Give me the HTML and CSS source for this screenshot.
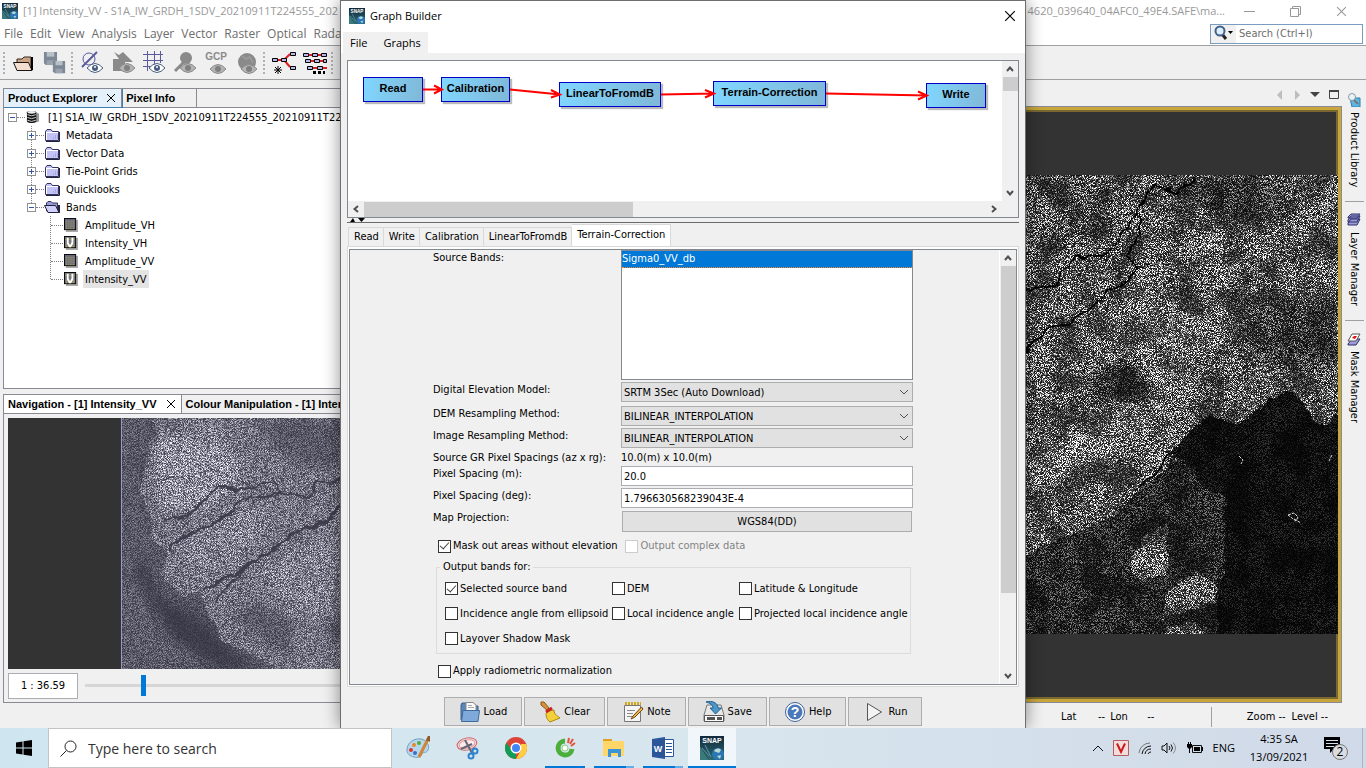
FILE: index.html
```
<!DOCTYPE html>
<html lang="en">
<head>
  <meta charset="UTF-8" />
  <meta name="viewport" content="width=device-width, initial-scale=1.0" />
  <title>SNAP - Graph Builder</title>
  <link rel="stylesheet" href="styles.css">
</head>
<body>
  <!-- shared icon shapes -->
  <svg class="defs" width="0" height="0" aria-hidden="true">
    <defs>
      <linearGradient id="snapBg" x1="0" y1="0" x2="0" y2="1">
        <stop offset="0" stop-color="#12293a" />
        <stop offset="1" stop-color="#2e6a74" />
      </linearGradient>
      <symbol id="snap" viewBox="0 0 24 24">
        <rect width="24" height="24" fill="url(#snapBg)" />
        <path d="M0 10 8 24H0z" fill="#3b7a7a" />
        <path d="M2 12l7 8M5 9l6 12" stroke="#5d9aa0" />
        <circle cx="18" cy="18" r="6" fill="#2b77b5" />
        <path d="M14 15c2-3 5-3 7-1l-2 3-3-1zM17 20l4-1-1 4z" fill="#b9d9d2" />
        <text x="12" y="7" text-anchor="middle" class="snap-word">SNAP</text>
      </symbol>
      <symbol id="eye" viewBox="0 0 16 10">
        <path d="M0 5Q8-4 16 5Q8 14 0 5z" fill="#fff" stroke="currentColor" />
        <circle cx="8" cy="5" r="3" fill="currentColor" />
        <circle cx="8" cy="4" r="1" fill="#fff" />
      </symbol>
      <symbol id="greyeye" viewBox="0 0 16 10">
        <path d="M0 5Q8-4 16 5Q8 14 0 5z" fill="#b4b4b4" stroke="#8c8c8c" />
        <circle cx="8" cy="5" r="3" fill="#808080" />
      </symbol>
      <symbol id="folder" viewBox="0 0 16 14">
        <path d="M1.500 12.500V3.500L3 1.500H7L8.500 3.500H14.500V12.500z" fill="#c3c3f5" stroke="#33335c" />
        <path d="M2 4.500H14M2.500 5V12" stroke="#fff" />
        <path d="M9 10h5M11 8h3" stroke="#8f8fd0" stroke-dasharray="1 1" />
        <path d="M15.500 4V13.500H2" stroke="#22223f" fill="none" />
      </symbol>
      <symbol id="folder-open" viewBox="0 0 16 14">
        <path d="M2.500 11V3L4 1.500H7L8.500 3H13.500V11z" fill="#9a9ad8" stroke="#33335c" />
        <path d="M.500 5.500H11.500L15 12.500H4z" fill="#d0d0fa" stroke="#22223f" />
        <path d="M15 5V13" stroke="#22223f" stroke-width="2" />
      </symbol>
      <symbol id="band" viewBox="0 0 15 15">
        <rect x="2" y="2" width="13" height="13" fill="#aaa" />
        <rect x=".500" y=".500" width="12" height="12" fill="#66667c" stroke="#000" />
        <path d="M2 3.500H12M2 5.500H12M2 7.500H12M2 9.500H12M2 11.500H12" stroke="#bdb45a" stroke-dasharray="1 1" />
      </symbol>
      <symbol id="band-v" viewBox="0 0 15 15">
        <rect x="2" y="2" width="13" height="13" fill="#aaa" />
        <rect x=".500" y=".500" width="12" height="12" fill="#77777c" stroke="#000" />
        <path d="M2 3.500H12M2 9.500H12M2 11.500H12" stroke="#c8be5a" stroke-dasharray="1 1" />
        <path d="M3 2H5V7L6.500 10 8 7V2H10V8L7.500 12H5.500L3 8z" fill="#fff" />
      </symbol>
      <symbol id="db" viewBox="0 0 15 15">
        <path d="M3 13h9l2-1v-8l-2-1z" fill="#999" />
        <path d="M1 2.500C1 .5 11 .5 11 2.500V12C11 14.500 1 14.500 1 12z" fill="#111" />
        <ellipse cx="6" cy="2.500" rx="4.500" ry="1.500" fill="#eee" />
        <path d="M1.500 5Q6 7.500 10.500 5M1.500 8Q6 10.500 10.500 8M1.500 11Q6 13.500 10.500 11" stroke="#ddd" fill="none" />
      </symbol>
      <symbol id="x" viewBox="0 0 10 10">
        <path d="M1 1 9 9M9 1 1 9" stroke="currentColor" fill="none" />
      </symbol>
      <symbol id="chev" viewBox="0 0 10 6">
        <path d="M1 1 5 5 9 1" stroke="currentColor" fill="none" />
      </symbol>
      <symbol id="arrow" viewBox="0 0 8 6">
        <path d="M1 1 4 4.500 7 1" stroke="#505050" stroke-width="2" fill="none" />
      </symbol>
      <symbol id="disk" viewBox="0 0 16 16">
        <path d="M1 1H15V15H3L1 13z" fill="#7d8896" />
        <path d="M4 1H12V6H4z" fill="#b9c0c8" />
        <path d="M4 10H12V15H4z" fill="#9aa3ad" />
      </symbol>

      <!-- radar speckle: fine noise multiplied over the shapes, with coarse patches -->
      <filter id="speckle" x="0" y="0" width="100%" height="100%" color-interpolation-filters="sRGB">
        <feTurbulence type="fractalNoise" baseFrequency="1.370" numOctaves="4" seed="7" />
        <feColorMatrix values="3 0 0 0 -1.100  3 0 0 0 -1.100  3 0 0 0 -1.100  0 0 0 0 1" />
        <feComponentTransfer result="fine">
          <feFuncR type="gamma" exponent="2" />
          <feFuncG type="gamma" exponent="2" />
          <feFuncB type="gamma" exponent="2" />
        </feComponentTransfer>
        <feTurbulence type="fractalNoise" baseFrequency="0.035" numOctaves="5" seed="3" />
        <feColorMatrix values="3 0 0 0 -1  3 0 0 0 -1  3 0 0 0 -1  0 0 0 0 1" result="coarse" />
        <feComposite in="fine" in2="coarse" operator="arithmetic" k1="1" k2=".500" result="ground" />
        <feComposite in="SourceGraphic" in2="ground" operator="arithmetic" k1="2.200" k2=".160" />
      </filter>
      <filter id="speckleNav" x="0" y="0" width="100%" height="100%" color-interpolation-filters="sRGB">
        <feTurbulence type="fractalNoise" baseFrequency="1.370" numOctaves="4" seed="21" />
        <feColorMatrix values="2.600 0 0 0 -.950  2.600 0 0 0 -.950  2.600 0 0 0 -.950  0 0 0 0 1" result="fine" />
        <feComposite in="SourceGraphic" in2="fine" operator="arithmetic" k1="1.400" k2=".120" />
        <feColorMatrix values=".760 0 0 0 .200  0 .760 0 0 .195  0 0 .760 0 .250  0 0 0 0 1" />
      </filter>
      <filter id="rough" x="-5%" y="-5%" width="110%" height="110%">
        <feTurbulence type="fractalNoise" baseFrequency="0.080" numOctaves="3" seed="5" />
        <feDisplacementMap in="SourceGraphic" scale="9" xChannelSelector="R" yChannelSelector="G" />
      </filter>
      <filter id="soft"><feGaussianBlur stdDeviation="6" /></filter>
      <filter id="softer"><feGaussianBlur stdDeviation="14" /></filter>
    </defs>
  </svg>

  <div class="desktop">
    <div class="app">
      <header class="titlebar">
        <svg class="i16"><use href="#snap" /></svg>
        <span class="title-start">[1] Intensity_VV - S1A_IW_GRDH_1SDV_20210911T224555_202</span>
        <span class="title-end">4620_039640_04AFC0_49E4.SAFE\ma...</span>
        <button class="win-btn" aria-label="Minimize"><svg width="11" height="11"><path d="M0 5.500H11" stroke="currentColor" /></svg></button>
        <button class="win-btn" aria-label="Restore"><svg width="11" height="11" fill="none" stroke="currentColor"><path d="M.500 2.500H8.500V10.500H.500zM2.500 2V.500H10.500V8.500H9" /></svg></button>
        <button class="win-btn" aria-label="Close"><svg width="11" height="11"><use href="#x" /></svg></button>
      </header>

      <div class="menurow">
        <nav class="menubar">
          <button>File</button><button>Edit</button><button>View</button><button>Analysis</button><button>Layer</button><button>Vector</button><button>Raster</button><button>Optical</button><button>Radar</button>
        </nav>
        <div class="quick">
          <button class="quick-btn" aria-label="Search options">
            <svg width="20" height="16" viewBox="0 0 20 16">
              <path d="M8 9l4 5" stroke="#222" stroke-width="3" />
              <circle cx="6" cy="6" r="4.500" fill="#dcefff" stroke="#44618a" stroke-width="2" />
              <path d="M14 6h5l-2.500 3z" />
            </svg>
          </button>
          <input type="text" aria-label="Search" placeholder="Search (Ctrl+I)" />
        </div>
      </div>

      <div class="toolbar">
        <i class="grip"></i>
        <button aria-label="Open product"><svg width="24" height="24" viewBox="0 0 24 24"><path d="M5 18V8H10L12 6H19V18z" fill="#c9a586" stroke="#3a2a20" /><path d="M1.500 11.500H16.500L20 19.500H5z" fill="#f3dfcf" stroke="#1c1410" /><path d="M20 6v13" stroke="#000" stroke-width="2" /></svg></button>
        <button aria-label="Save all"><svg width="24" height="24" viewBox="0 0 24 24"><use href="#disk" width="15" height="15" x="0" y="0" /><use href="#disk" width="14" height="14" x="9" y="9" /></svg></button>
        <i class="grip"></i>
        <button class="blue" aria-label="No-data overlay"><svg width="24" height="24" viewBox="0 0 24 24"><circle cx="9" cy="8" r="6" fill="none" stroke="#5a5a9c" /><path d="M2 16 17 1" stroke="#5a5a9c" stroke-width="2" /><use href="#eye" x="7" y="12" width="16" height="10" /></svg></button>
        <button aria-label="Shape overlay"><svg width="24" height="24" viewBox="0 0 24 24"><path d="M2 8h6L3 1l5 3 4-3 10 10H14v9H2z" fill="#8a8a8a" /><use href="#greyeye" x="8" y="12" width="16" height="10" /></svg></button>
        <button class="blue" aria-label="Graticule overlay"><svg width="24" height="24" viewBox="0 0 24 24"><path d="M5.500 0V20M12.500 0V20M18.500 0V12M1 3.500H21M1 9.500H21M1 15.500H10" stroke="#5a5a9c" /><use href="#eye" x="7" y="12" width="16" height="10" /></svg></button>
        <button aria-label="Pin overlay"><svg width="24" height="24" viewBox="0 0 24 24"><path d="M2 20 11 11" stroke="#8a8a8a" stroke-width="3" /><circle cx="13" cy="7" r="6" fill="#8a8a8a" /><use href="#greyeye" x="7" y="12" width="16" height="10" /></svg></button>
        <button aria-label="GCP overlay"><svg width="24" height="24" viewBox="0 0 24 24"><text x="12" y="9" text-anchor="middle" class="gcp">GCP</text><use href="#greyeye" x="6" y="13" width="16" height="10" /></svg></button>
        <button aria-label="World map overlay"><svg width="24" height="24" viewBox="0 0 24 24"><circle cx="12" cy="11" r="9" fill="#8a8a8a" /><path d="M7 5l4 3 4-2 3 6" stroke="#9a9a9a" fill="none" stroke-width="2" /><use href="#greyeye" x="6" y="13" width="16" height="10" /></svg></button>
        <i class="grip"></i>
        <button aria-label="Graph Builder"><svg width="24" height="24" viewBox="0 0 24 24"><path d="M5 9H12L18 3M12 9 18 16" stroke="#e02020" stroke-width="2" fill="none" /><g fill="#b8b8f0" stroke="#000"><path d="M.500 7.500h5v3h-5zM9.500 7.500h5v3h-5zM18.500 1.500h5v3h-5zM18.500 15.500h5v3h-5z" /></g><path d="M6 15v8M2 19h8M3 16l6 6M9 16l-6 6" stroke="#000" /></svg></button>
        <button aria-label="Batch processing"><svg width="24" height="24" viewBox="0 0 24 24"><path d="M1 4H23M3 10H24M5 17H24" stroke="#e02020" stroke-width="2" /><g fill="#b8b8f0" stroke="#000"><path d="M.500 2.500h5v3h-5zM9.500 2.500h5v3h-5zM18.500 2.500h5v3h-5zM2.500 8.500h5v3h-5zM11.500 8.500h5v3h-5zM20.500 8.500h3v3h-3zM4.500 15.500h5v3h-5zM14.500 15.500h5v3h-5z" /></g><path d="M10 21.500h12" stroke="#000" stroke-width="3" stroke-dasharray="3 2" /></svg></button>
        <i class="grip"></i>
      </div>

      <div class="workspace">
        <aside class="dock">
          <section class="pane pane-explorer">
            <div class="pane-tabs">
              <button class="pane-tab is-focus">Product Explorer <svg width="10" height="10"><use href="#x" /></svg></button>
              <button class="pane-tab">Pixel Info</button>
            </div>
            <ul class="tree">
              <li><i class="box minus"></i><i class="dash"></i><svg class="ico"><use href="#db" /></svg><span class="root">[1] S1A_IW_GRDH_1SDV_20210911T224555_20210911T224620</span></li>
              <li class="l1"><span class="twig"><i class="box plus"></i></span><i class="dash"></i><svg class="ico"><use href="#folder" /></svg><span>Metadata</span></li>
              <li class="l1"><span class="twig"><i class="box plus"></i></span><i class="dash"></i><svg class="ico"><use href="#folder" /></svg><span>Vector Data</span></li>
              <li class="l1"><span class="twig"><i class="box plus"></i></span><i class="dash"></i><svg class="ico"><use href="#folder" /></svg><span>Tie-Point Grids</span></li>
              <li class="l1"><span class="twig"><i class="box plus"></i></span><i class="dash"></i><svg class="ico"><use href="#folder" /></svg><span>Quicklooks</span></li>
              <li class="l1"><span class="twig end"><i class="box minus"></i></span><i class="dash"></i><svg class="ico"><use href="#folder-open" /></svg><span>Bands</span></li>
              <li class="l2"><span class="twig"></span><i class="dash"></i><svg class="ico"><use href="#band" /></svg><span>Amplitude_VH</span></li>
              <li class="l2"><span class="twig"></span><i class="dash"></i><svg class="ico"><use href="#band-v" /></svg><span>Intensity_VH</span></li>
              <li class="l2"><span class="twig"></span><i class="dash"></i><svg class="ico"><use href="#band" /></svg><span>Amplitude_VV</span></li>
              <li class="l2"><span class="twig end"></span><i class="dash"></i><svg class="ico"><use href="#band-v" /></svg><span class="picked">Intensity_VV</span></li>
            </ul>
          </section>

          <section class="pane pane-nav">
            <div class="pane-tabs">
              <button class="pane-tab is-open">Navigation - [1] Intensity_VV <svg width="10" height="10"><use href="#x" /></svg></button>
              <button class="pane-tab">Colour Manipulation - [1] Intensity_VV</button>
            </div>
            <div class="overview">
              <svg width="280" height="251" viewBox="0 0 280 251">
                <g filter="url(#speckleNav)">
                  <rect width="280" height="251" fill="#484848" />
                  <path d="M0 0H26L8 60 20 130 50 190 80 251H0z" fill="#5c5c5c" filter="url(#softer)" />
                  <path d="M18 130 40 180 80 200 130 251H100L50 220 15 160z" fill="#181818" filter="url(#soft)" />
                  <g filter="url(#rough)">
                    <path d="M32 0 39 16 27 43 19 73 32 103 29 119 45 133 39 156 59 178 79 176 85 189 95 209 99 221 135 239 159 255H290V0z" fill="#8a8a8a" />
                  </g>
                  <g filter="url(#soft)">
                    <path d="M34 20 80 5 100 20 125 60 90 90 44 95 34 60z" fill="#c4c4c4" />
                    <path d="M60 125 120 85 150 100 110 150 75 160z" fill="#a8a8a8" />
                    <path d="M140 150 190 115 215 130 210 190 170 200z" fill="#a4a4a4" />
                    <path d="M130 0H240V45L180 50 150 25z" fill="#505050" />
                    <path d="M110 195 140 185 175 205 165 240z" fill="#505050" />
                    <path d="M200 215 240 190V230z" fill="#303030" />
                    <path d="M35 5 60 14 90 22" stroke="#404040" stroke-width="6" fill="none" />
                  </g>
                </g>
                <g fill="none" stroke="#3f3d4d" stroke-width="2" filter="url(#rough)">
                  <path d="M49 133 52 126 95 103 129 78 159 76 189 78 195 64 222 63H245" />
                  <path d="M45 103 65 98 89 78 99 66 115 73 155 64 160 76" />
                  <path d="M39 61 72 58 92 51 129 68" stroke-width="1" />
                  <path d="M79 173 122 151 149 133 175 114 205 103 222 88 245 78" stroke-width="3" />
                  <path d="M95 184 109 166 125 149M54 124 114 94" />
                </g>
                <path d="M.500 0V251" stroke="#9a98c8" />
              </svg>
            </div>
            <div class="zoomrow">
              <input class="scale" type="text" aria-label="Scale" value="1 : 36.59" />
              <input class="slider" type="range" aria-label="Zoom" min="0" max="100" value="17" />
            </div>
          </section>
        </aside>

        <main class="editor">
          <div class="editor-nav">
            <svg width="8" height="12"><path d="M6 1V11L1 6z" fill="#bdbdbd" /></svg>
            <svg width="8" height="12"><path d="M2 1V11L7 6z" fill="#bdbdbd" /></svg>
            <svg width="10" height="6"><path d="M0 0H10L5 5z" fill="#444" /></svg>
            <svg width="10" height="9"><path d="M.500 1.500H9.500V8.500H.500z" fill="none" stroke="#444" /><path d="M0 1H10" stroke="#444" stroke-width="2" /></svg>
          </div>
          <div class="scene">
            <svg width="314" height="459" viewBox="0 0 314 459">
              <g filter="url(#speckle)">
                <rect width="314" height="459" fill="#808080" />
                <g filter="url(#soft)">
                  <path d="M0 0H110L90 60 0 90z" fill="#6a6a6a" />
                  <path d="M130 5H260V40L200 45z" fill="#484848" />
                  <path d="M220 130H314V200L230 190z" fill="#505050" />
                  <path d="M70 150 130 110 180 150 160 220 110 190z" fill="#a5a5a5" />
                  <path d="M0 320 60 290 130 250 150 225 100 220 20 280z" fill="#b0b0b0" />
                  <path d="M60 195 120 180 130 230 70 230zM150 95 165 110 155 130z" fill="#4a4a4a" />
                </g>
                <g filter="url(#rough)">
                  <path d="M-8 385 32 365 89 341 116 315 142 295 152 280 166 291 182 315 201 321V398L193 411 194 470H-8z" fill="#383838" />
                  <path d="M124 356 142 349 144 364 143 399 116 406 104 394zM144 416 174 396 193 411 190 429 137 444zM144 452 169 446 182 463H140z" fill="#808080" />
                  <path d="M144 281 156 265 184 241 216 249 246 225 269 216 282 231 292 248 302 250 325 230V470H194L193 411 201 398V321L182 315 166 291 151 280z" fill="#141414" />
                </g>
              </g>
              <g fill="none" stroke="#050505" stroke-width="2" filter="url(#rough)">
                <path d="M0 112 21 113 34 108 37 95 49 83 82 80 99 58 114 35 121 20 131 11 142 13 154 18 169 3" />
                <path d="M0 178 22 156 49 146 69 131 86 116 106 106 112 91 104 80 116 58 116 38" />
                <path d="M121 20 139 21 154 18M69 131V119L86 116M112 91 129 89 144 82" stroke-width="1" />
                <path d="M144 281 132 299 116 312" />
              </g>
              <path d="M149 124V200" stroke="#999" stroke-dasharray="4 5" />
              <path d="M198 320V395" stroke="#999" stroke-dasharray="1 4" />
              <path d="M264 340l6-2 4 4-2 4zM270 344l7 4M215 281l4 4-2 4M308 280l-3 6" stroke="#ddd" fill="none" stroke-dasharray="3 1" />
            </svg>
          </div>
        </main>

        <aside class="side">
          <button><svg width="14" height="14" viewBox="0 0 14 14"><path d="M3 5h10v9H5z" fill="#5fb4e0" stroke="#2c7fb0" /><circle cx="5" cy="4" r="3.500" fill="#e8f2f8" stroke="#8a9aa4" /><path d="M7 7l4 4" stroke="#777" stroke-width="2" /></svg><span>Product Library</span></button>
          <button><svg width="14" height="14" viewBox="0 0 14 14"><path d="M1 10 4 6H13L10 12H1zM1 7 4 3H13L10 9H1zM1 4 4 1H13L10 5H1z" fill="#9d9ddd" stroke="#2d2d66" /></svg><span>Layer Manager</span></button>
          <button><svg width="14" height="14" viewBox="0 0 14 14"><path d="M1 12 5 7H13L9 13H1z" fill="#9d9ddd" stroke="#2d2d66" /><path d="M1 9 5 2H13L9 9z" fill="#fff" stroke="#555" /><path d="M5 6 7 4H10L8 7z" fill="#e01010" /></svg><span>Mask Manager</span></button>
        </aside>
      </div>

      <footer class="status">
        <div class="coords"><span>Lat</span><span>--</span><span>Lon</span><span>--</span></div>
        <div class="levels"><span>Zoom --</span><span>Level --</span></div>
      </footer>
    </div>

    <div class="dialog" role="dialog" aria-label="Graph Builder">
      <header class="dialog-title">
        <svg class="i16"><use href="#snap" /></svg>
        <span>Graph Builder</span>
        <button aria-label="Close"><svg width="12" height="12"><use href="#x" /></svg></button>
      </header>
      <nav class="dialog-menu"><button>File</button><button>Graphs</button></nav>

      <div class="dialog-body">
        <div class="graph">
          <div class="canvas">
            <svg class="edges" width="654" height="140">
              <g stroke="#f00" stroke-width="2" fill="none">
                <path d="M75 28.500H94M86 24.500 94 28.500 86 32.500" />
                <path d="M162 28.500 212 33.500M203 29 212 33.500 203 36.500" />
                <path d="M313 33.500 366 32.500M357 29 366 32.500 357 36.500" />
                <path d="M478 32.500 579 34.500M570 30.500 579 34.500 570 38.500" />
              </g>
            </svg>
            <div class="node node-read">Read</div>
            <div class="node node-cal">Calibration</div>
            <div class="node node-db">LinearToFromdB</div>
            <div class="node node-tc">Terrain-Correction</div>
            <div class="node node-write">Write</div>
          </div>
          <div class="vbar"><svg class="up"><use href="#arrow" /></svg><i class="thumb"></i><svg class="down"><use href="#arrow" /></svg></div>
          <div class="hbar"><svg class="left"><use href="#arrow" /></svg><i class="thumb"></i><svg class="right"><use href="#arrow" /></svg></div>
        </div>
        <div class="splitter"><svg width="18" height="4"><path d="M3 4 6 0 8 4zM11 0H18L14.500 4z" /></svg></div>

        <div class="tabs" role="tablist">
          <button role="tab">Read</button><button role="tab">Write</button><button role="tab">Calibration</button><button role="tab">LinearToFromdB</button><button role="tab" class="on" aria-selected="true">Terrain-Correction</button>
        </div>

        <div class="tabpage">
          <div class="scroll">
            <form class="form">
              <div class="fields">
                <label for="bands">Source Bands:</label>
                <select id="bands" class="list" size="8" multiple><option selected>Sigma0_VV_db</option></select>
                <label for="dem">Digital Elevation Model:</label>
                <div class="combo"><select id="dem"><option>SRTM 3Sec (Auto Download)</option></select><svg><use href="#chev" /></svg></div>
                <label for="demr">DEM Resampling Method:</label>
                <div class="combo"><select id="demr"><option>BILINEAR_INTERPOLATION</option></select><svg><use href="#chev" /></svg></div>
                <label for="imgr">Image Resampling Method:</label>
                <div class="combo"><select id="imgr"><option>BILINEAR_INTERPOLATION</option></select><svg><use href="#chev" /></svg></div>
                <span>Source GR Pixel Spacings (az x rg):</span>
                <span>10.0(m) x 10.0(m)</span>
                <label for="psm">Pixel Spacing (m):</label>
                <input id="psm" class="text" type="text" value="20.0" />
                <label for="psd">Pixel Spacing (deg):</label>
                <input id="psd" class="text" type="text" value="1.796630568239043E-4" />
                <label for="proj">Map Projection:</label>
                <button id="proj" class="btn proj" type="button">WGS84(DD)</button>
              </div>
              <div class="checks">
                <label><input type="checkbox" checked />Mask out areas without elevation</label>
                <label class="off"><input type="checkbox" disabled />Output complex data</label>
              </div>
              <fieldset>
                <legend>Output bands for:</legend>
                <label><input type="checkbox" checked />Selected source band</label>
                <label><input type="checkbox" />DEM</label>
                <label><input type="checkbox" />Latitude &amp; Longitude</label>
                <label><input type="checkbox" />Incidence angle from ellipsoid</label>
                <label><input type="checkbox" />Local incidence angle</label>
                <label><input type="checkbox" />Projected local incidence angle</label>
                <label><input type="checkbox" />Layover Shadow Mask</label>
              </fieldset>
              <div class="checks last">
                <label><input type="checkbox" />Apply radiometric normalization</label>
              </div>
            </form>
            <div class="vbar"><svg class="up"><use href="#arrow" /></svg><i class="thumb"></i><svg class="down"><use href="#arrow" /></svg></div>
          </div>
        </div>

        <div class="actions">
          <button class="btn"><svg width="22" height="22" viewBox="0 0 22 22"><path d="M2 19V4l1-2h5v3h11v5" fill="#5b86b8" stroke="#3a5f8c" /><path d="M7 1.500H14L17 4V12H7z" fill="#fafafa" stroke="#888" /><path d="M9 4.500h4M9 6.500h6" stroke="#aaa" /><path d="M4 9.500H20.500L19 20.500H2.500z" fill="#7ea9d8" stroke="#3f6a9c" /></svg>Load</button>
          <button class="btn"><svg width="22" height="22" viewBox="0 0 22 22"><path d="M2 1 5 1 10 7 8 9 2 4z" fill="#d9923c" stroke="#8a5414" /><path d="M10 10 15 9C15 14 19 15 21 17L11 21C7 18 7 14 7 12z" fill="#f5cf3a" stroke="#a98a10" /><path d="M7 11 13 7" stroke="#c22" stroke-width="3" /></svg>Clear</button>
          <button class="btn"><svg width="22" height="22" viewBox="0 0 22 22"><path d="M2.500 4.500H18.500V20.500H2.500z" fill="#f5f5f5" stroke="#777" /><path d="M3 2.500H19" stroke="#d0a820" stroke-width="3" stroke-dasharray="2 1" /><path d="M5 9.500h8M5 12.500h6M5 15.500h5" stroke="#888" /><path d="M19.500 6 11 15l-2 3 4-2 8-8z" fill="#eeb84c" stroke="#6b4510" /></svg>Note</button>
          <button class="btn"><svg width="22" height="22" viewBox="0 0 22 22"><path d="M4 4H18L21 14V20H1V14z" fill="#e8e8e8" stroke="#777" /><path d="M1.500 14.500H20.500V20.500H1.500z" fill="#fafafa" stroke="#555" /><path d="M4 17.500h8M14 17.500h5" stroke="#555" stroke-width="3" stroke-dasharray="8 1 1 1" /><path d="M3 1C9-1 15 2 15 7H18.500L12.500 13 7 7H10C10 4 7 2 3 1z" fill="#4f96c8" stroke="#22608e" /></svg>Save</button>
          <button class="btn"><svg width="22" height="22" viewBox="0 0 22 22"><circle cx="11" cy="11" r="9.500" fill="#fff" stroke="#3d5f96" /><circle cx="11" cy="11" r="7.500" fill="#4a78b8" /><text x="11" y="16" text-anchor="middle" class="qmark">?</text></svg>Help</button>
          <button class="btn"><svg width="22" height="22" viewBox="0 0 22 22"><path d="M4.500 2.500 18.500 11 4.500 19.500z" fill="#f4f4f4" stroke="#555" /></svg>Run</button>
        </div>
      </div>
    </div>
  </div>

  <div class="taskbar">
    <button class="start" aria-label="Start"><svg width="16" height="16" viewBox="0 0 16 16"><path d="M0 2.500 6.500 1.500V7.500H0zM7.500 1.300 16 0V7.500H7.500zM0 8.500H6.500V14.500L0 13.500zM7.500 8.500H16V16L7.500 14.700z" /></svg></button>
    <label class="search"><svg width="17" height="17" viewBox="0 0 17 17"><circle cx="10.500" cy="6.500" r="5.500" fill="none" stroke="#222" /><path d="M6.500 10.500.500 16.500" stroke="#222" /></svg><input type="text" aria-label="Search" placeholder="Type here to search" /></label>
    <div class="apps">
      <button aria-label="Paint"><svg width="24" height="24" viewBox="0 0 24 24"><path d="M1 14C1 6 9 2 15 3S24 10 22 14 17 15 16 18 12 22 8 21 1 18 1 14z" fill="#b4d7ee" stroke="#6fa0c0" /><circle cx="5" cy="14" r="2" fill="#d33" /><circle cx="8" cy="9" r="2" fill="#e58a28" /><circle cx="13" cy="7" r="2" fill="#58a838" /><circle cx="9" cy="17" r="2" fill="#3b6fc8" /><path d="M22 3 13 21" stroke="#d08536" stroke-width="3" /><path d="M22 5 24 0" stroke="#8c5a2c" stroke-width="4" /></svg></button>
      <button aria-label="Snipping Tool"><svg width="24" height="24" viewBox="0 0 24 24" fill="none"><ellipse cx="12" cy="8" rx="10" ry="6" stroke="#e05a5a" transform="rotate(-12 12 8)" /><ellipse cx="12" cy="8" rx="8" ry="4" fill="#fbeaea" stroke="#ee9a9a" transform="rotate(-12 12 8)" /><path d="M10 4 17 17M17 8 6 13" stroke="#667" stroke-width="2" /><circle cx="16" cy="20" r="2.500" stroke="#2f83cc" stroke-width="2" /><circle cx="20" cy="15" r="2.500" stroke="#2f83cc" stroke-width="2" /></svg></button>
      <button aria-label="Chrome"><svg width="24" height="24" viewBox="0 0 24 24"><circle cx="12" cy="12" r="11" fill="#db4437" /><path d="M2.500 6.500 8 15 12 17 12 23A11 11 0 0 1 2.500 6.500z" fill="#0f9d58" /><path d="M12 23 17 14V8H22.300A11 11 0 0 1 12 23z" fill="#ffcd40" /><circle cx="12" cy="12" r="5.500" fill="#fff" /><circle cx="12" cy="12" r="4" fill="#4285f4" /></svg></button>
      <button class="run" aria-label="Coc Coc"><svg width="24" height="24" viewBox="0 0 24 24" fill="none"><path d="M12 5A7 7 0 1 0 19 13" stroke="#4caf3c" stroke-width="5" /><circle cx="12" cy="12" r="3" fill="#fff" stroke="#8fcf80" /><path d="M15 7 16 2M17 8 20 3M18 10 22 7" stroke="#e8503c" stroke-width="2" /></svg></button>
      <button class="run more" aria-label="File Explorer"><svg width="24" height="24" viewBox="0 0 24 24"><path d="M1 3H10V6H1z" fill="#e0a020" /><path d="M1 5H22V20H1z" fill="#ffd667" /><path d="M6 21V13H19V21H16V17H9V21z" fill="#3a94d8" /></svg></button>
      <button class="run more" aria-label="Word"><svg width="24" height="24" viewBox="0 0 24 24"><path d="M13.500 3.500H22.500V20.500H13.500z" fill="#fff" stroke="#2b579a" /><path d="M15 7.500h6M15 10.500h6M15 13.500h6M15 16.500h6" stroke="#2b579a" /><path d="M1 3 14 1V23L1 21z" fill="#2b579a" /><text x="7" y="16" text-anchor="middle" class="word">W</text></svg></button>
      <button class="run active" aria-label="SNAP"><svg width="24" height="24"><use href="#snap" /></svg></button>
    </div>
    <div class="tray">
      <svg width="12" height="8" viewBox="0 0 12 8"><path d="M1 7 6 2 11 7" fill="none" stroke="#111" /></svg>
      <svg width="16" height="16" viewBox="0 0 16 16"><path d="M.500 .500H15.500V15.500H.500z" fill="#f4dcdc" stroke="#b06060" /><path d="M4 3.500 8 12 12 3.500" fill="none" stroke="#cc1818" stroke-width="2" /></svg>
      <svg width="14" height="14" viewBox="0 0 14 14" fill="none" stroke="#111"><path d="M1 12A11 11 0 0 1 12 2" stroke="#777" /><path d="M4 13A9 9 0 0 1 13 5M7 13A6 6 0 0 1 13 8M10 13A3 3 0 0 1 13 11" /></svg>
      <svg width="17" height="14" viewBox="0 0 17 14" fill="none" stroke="#111"><path d="M1 5H3L6 2V12L3 9H1zM8 5Q10 7 8 9M10 3.500Q13 7 10 10.500" /><path d="M12 1.500Q17 7 12 12.500" stroke="#888" /></svg>
      <svg width="17" height="12" viewBox="0 0 17 12"><path d="M5.500 3.500H14.500V10.500H5.500z" fill="none" stroke="#111" /><path d="M7 5h6v4H7zM15 5h1v4h-1zM0 2h5v3L3 7H2L0 5zM1 0h1v2H1zM3 0h1v2H3zM2 7h1v4H2z" /></svg>
      <span class="lang">ENG</span>
      <div class="clock"><span>4:35 SA</span><span>13/09/2021</span></div>
      <svg width="26" height="24" viewBox="0 0 26 24"><path d="M1 1H17V13H11L7 17V13H1z" /><path d="M3 4.500H15M3 7.500H15M3 10.500H11" stroke="#d5e0ea" /><circle cx="17" cy="16" r="7.500" fill="#d9dde0" stroke="#777" /><text x="17" y="20" text-anchor="middle" class="count">2</text></svg>
      <i class="peek"></i>
    </div>
  </div>
</body>
</html>
```

FILE: styles.css
```
* {
  box-sizing: border-box;
}

body {
  margin: 0;
  height: 100vh;
  display: flex;
  flex-direction: column;
  overflow: hidden;
  font-family: "DejaVu Sans Condensed", "Noto Sans", sans-serif;
  font-size: 11px;
  line-height: 14px;
  color: #000;
}

button, input, select {
  font: inherit;
  color: inherit;
  margin: 0;
}

button {
  border: 0;
  padding: 0;
  background: none;
  white-space: nowrap;
}

svg {
  flex: none;
}

.defs {
  position: absolute;
}

.snap-word {
  font: bold 7px "Liberation Sans", sans-serif;
  fill: #fff;
}

.i16 {
  width: 16px;
  height: 16px;
}

.desktop {
  flex: 1;
  min-height: 0;
  position: relative;
  overflow: hidden;
}

/* main window */

.app {
  height: 100%;
  display: flex;
  flex-direction: column;
  background: #f0f0f0;
}

.titlebar {
  height: 22px;
  display: flex;
  align-items: center;
  padding: 0 2px;
  background: #fff;
  color: #999;
  font-family: "Open Sans", sans-serif;
  font-size: 11px;
}

.title-start {
  flex: 1;
  margin-left: 5px;
  white-space: nowrap;
}

.title-end {
  margin-right: 1px;
}

.win-btn {
  width: 46px;
  display: flex;
  justify-content: center;
}

.menurow {
  height: 24px;
  display: flex;
  align-items: center;
  justify-content: space-between;
  background: #fff;
  border-bottom: 1px solid #a0a0a0;
  padding: 0 3px 0 4px;
}

.menubar {
  display: flex;
  gap: 7px;
  font-family: "Open Sans", sans-serif;
  font-size: 12px;
  color: #6d6d6d;
}

.quick {
  width: 153px;
  height: 20px;
  display: flex;
  border: 1px solid #7a9cc0;
}

.quick-btn {
  width: 25px;
  background: #f0f0f0;
}

.quick input {
  flex: 1;
  min-width: 0;
  border: 0;
  padding: 0 3px;
}

.quick input::placeholder {
  color: #6d6d6d;
}

.toolbar {
  height: 34px;
  display: flex;
  align-items: center;
  padding: 0 2px;
  border-bottom: 1px solid #a0a0a0;
}

.toolbar button {
  width: 31px;
  display: flex;
  justify-content: center;
}

.toolbar .blue {
  color: #4a5f80;
}

.grip {
  width: 6px;
  height: 22px;
  background: repeating-linear-gradient(#b0b0b0 0 2px, transparent 2px 4px) no-repeat 1px 0 / 2px 100%;
}

.gcp {
  font: bold 10px "Liberation Sans", sans-serif;
  fill: #8a8a8a;
}

.workspace {
  flex: 1;
  min-height: 0;
  display: flex;
  padding-top: 8px;
}

.dock {
  width: 420px;
  display: flex;
  flex-direction: column;
  gap: 5px;
  padding-left: 3px;
}

.pane {
  display: flex;
  flex-direction: column;
  border: 1px solid #8a8a94;
  overflow: hidden;
}

.pane-explorer {
  height: 301px;
  background: #fff;
}

.pane-nav {
  flex: 1;
  min-height: 0;
}

.pane-tabs {
  flex: none;
  height: 19px;
  display: flex;
  background: #f0f0f0;
  border-bottom: 1px solid #8a8a94;
}

.pane-tab {
  display: flex;
  align-items: center;
  gap: 9px;
  padding: 0 5px 0 4px;
  border-right: 1px solid #8a8a94;
  font-family: "Liberation Sans", sans-serif;
  font-size: 11px;
  font-weight: bold;
}

.pane-explorer .pane-tab + .pane-tab {
  padding-right: 21px;
}

.pane-tab.is-focus {
  background: #e4f1fb;
  outline: 1px solid #3c7fb1;
}

.pane-tab.is-open {
  background: #fff;
}

.tree {
  list-style: none;
  margin: 0;
  padding: 0 0 0 4px;
}

.tree li {
  height: 18px;
  display: flex;
  align-items: center;
  white-space: nowrap;
}

.tree .l1 {
  padding-left: 19px;
}

.tree .l2 {
  padding-left: 38px;
}

.box {
  width: 9px;
  height: 9px;
  border: 1px solid #919191;
  background: linear-gradient(#3355aa, #3355aa) no-repeat center / 5px 1px, #fff;
}

.box.plus {
  background: linear-gradient(#3355aa, #3355aa) no-repeat center / 5px 1px, linear-gradient(#3355aa, #3355aa) no-repeat center / 1px 5px, #fff;
}

.twig {
  width: 9px;
  height: 18px;
  display: flex;
  align-items: center;
  background: repeating-linear-gradient(#808080 0 1px, transparent 1px 2px) no-repeat 4px 0 / 1px 100%;
}

.twig.end {
  background-size: 1px 10px;
}

.dash {
  width: 8px;
  border-top: 1px dotted #808080;
}

.ico {
  width: 16px;
  height: 14px;
  margin-right: 4px;
}

.tree span:last-child {
  padding: 3px 2px 1px;
}

.tree .l2 .dash {
  width: 12px;
  margin-left: -4px;
}

.tree .root {
  margin-left: 1px;
}

.tree .picked {
  background: #e4e4e4;
}

.overview {
  margin: 4px 0 0 4px;
  display: flex;
  padding-left: 113px;
  background: #333;
}

.zoomrow {
  flex: 1;
  display: flex;
  align-items: center;
  padding-left: 4px;
  gap: 7px;
}

.scale {
  width: 70px;
  height: 26px;
  border: 1px solid #abadb3;
  text-align: center;
}

.slider {
  flex: 1;
  appearance: none;
  height: 21px;
  background: linear-gradient(#d6d6d6, #d6d6d6) no-repeat center / 100% 3px;
}

.slider::-webkit-slider-thumb {
  appearance: none;
  width: 5px;
  height: 21px;
  background: #0078d7;
}

.editor {
  flex: 1;
  display: flex;
  flex-direction: column;
}

.editor-nav {
  height: 18px;
  display: flex;
  align-items: center;
  justify-content: flex-end;
  gap: 9px;
  padding: 0 3px 5px;
}

.scene {
  flex: 1;
  min-height: 0;
  display: flex;
  align-items: center;
  justify-content: flex-end;
  background: #333;
  border: 1px solid #8a8a94;
  box-shadow: inset 0 0 0 3px #c8a63c, inset 0 0 0 5px #7a6830;
  padding-right: 3px;
}

.side {
  width: 24px;
  display: flex;
  flex-direction: column;
  align-items: center;
  padding-top: 5px;
}

.side button {
  height: 119px;
  width: 19px;
  display: flex;
  flex-direction: column;
  align-items: center;
  gap: 5px;
  padding-bottom: 16px;
}

.side button + button {
  border-top: 1px solid #a0a0a0;
  padding-top: 11px;
}

.side button:first-child {
  height: 108px;
}

.side span {
  writing-mode: vertical-rl;
}

.status {
  height: 25px;
  display: flex;
  justify-content: flex-end;
  align-items: center;
  padding-top: 3px;
}

.coords {
  width: 150px;
  display: flex;
  gap: 5px;
}

.coords span:nth-child(odd) {
  min-width: 32px;
}

.levels {
  height: 20px;
  width: 155px;
  display: flex;
  align-items: center;
  justify-content: flex-end;
  gap: 6px;
  padding-right: 38px;
  border-left: 1px solid #a0a0a0;
}

/* Graph Builder window */

.dialog {
  position: absolute;
  top: 0;
  bottom: 0;
  left: 340px;
  right: 340px;
  display: flex;
  flex-direction: column;
  background: #fff;
  border: 1px solid #6e6e6e;
  border-bottom: 0;
  box-shadow: 0 0 16px rgba(0, 0, 0, 0.45);
}

.dialog-title {
  height: 31px;
  display: flex;
  align-items: center;
  gap: 5px;
  padding: 0 9px 2px 8px;
  font-family: "Open Sans", sans-serif;
  font-size: 11px;
}

.dialog-title button {
  margin-left: auto;
  display: flex;
}

.dialog-menu {
  align-self: flex-start;
  height: 21px;
  margin-left: 2px;
  display: flex;
  gap: 16px;
  padding: 0 7px;
  background: #f0f0f0;
  font-family: "Open Sans", sans-serif;
  font-size: 11px;
}

.dialog-body {
  flex: 1;
  min-height: 0;
  display: flex;
  flex-direction: column;
  padding: 7px 6px 0;
  background: #f0f0f0;
}

.graph {
  height: 158px;
  display: grid;
  grid-template-columns: 1fr 16px;
  grid-template-rows: 1fr 16px;
  border: 1px solid #828790;
}

.canvas {
  position: relative;
  background: #fff;
  overflow: hidden;
}

.edges {
  position: absolute;
  z-index: 1;
}

.node {
  position: absolute;
  height: 25px;
  border: 1px solid #0000c8;
  background: linear-gradient(100deg, #80d6ff, #80b8d8);
  box-shadow: 2px 2px 1px #bbb;
  text-align: center;
  font: bold 11px/21px "Liberation Sans", sans-serif;
}

.node-read {
  left: 15px;
  top: 16px;
  width: 60px;
}

.node-cal {
  left: 93px;
  top: 16px;
  width: 69px;
}

.node-db {
  left: 211px;
  top: 21px;
  width: 102px;
}

.node-tc {
  left: 365px;
  top: 20px;
  width: 113px;
}

.node-write {
  left: 578px;
  top: 22px;
  width: 60px;
}

.vbar, .hbar {
  display: flex;
  align-items: center;
  justify-content: space-between;
  background: #f0f0f0;
}

.vbar {
  flex-direction: column;
}

.vbar svg, .hbar svg {
  width: 8px;
  height: 6px;
  margin: 5px;
}

.hbar svg {
  margin: 5px 4px;
}

.vbar .thumb, .hbar .thumb {
  background: #cdcdcd;
}

.up {
  transform: rotate(180deg);
}

.left {
  transform: rotate(90deg);
}

.right {
  transform: rotate(-90deg);
}

.hbar .thumb {
  width: 269px;
  height: 15px;
  margin-right: auto;
}

.graph .vbar .thumb {
  width: 15px;
  height: 14px;
  margin-bottom: auto;
}

.splitter {
  height: 5px;
  border-bottom: 1px solid #6a6a6a;
  display: flex;
}

.tabs {
  height: 23px;
  display: flex;
  align-items: flex-end;
  padding-left: 1px;
}

.tabs button {
  height: 19px;
  padding: 0 4px 0 5px;
  border: 1px solid #d9d9d9;
  border-width: 1px 1px 0 0;
}

.tabs button:first-child {
  border-left-width: 1px;
}

.tabs .on {
  height: 23px;
  padding: 0 5px 3px;
  background: #fff;
  margin-bottom: -1px;
}

.tabpage {
  flex: 1;
  min-height: 0;
  padding: 2px 1px 1px;
  border: 1px solid #d9d9d9;
  background: #fff;
  display: flex;
}

.scroll {
  flex: 1;
  display: flex;
  border: 1px solid #828790;
  background: #f0f0f0;
  overflow: hidden;
}

.scroll .vbar {
  width: 17px;
  border-left: 1px solid #fff;
}

.scroll .vbar .thumb {
  width: 15px;
  height: 327px;
  margin-bottom: auto;
}

.form {
  width: 483px;
  margin: 0 auto;
}

.fields {
  display: grid;
  grid-template-columns: 188px 292px;
  grid-template-rows: 132px 24px 22px 22px 16px 22px 22px 24px;
  align-items: start;
}

.fields label, .fields span {
  padding-top: 1px;
  white-space: nowrap;
}

.list {
  height: 130px;
  padding: 0;
  border: 1px solid #828790;
  border-radius: 0;
  background: #fff;
  overflow: hidden;
  outline: 0;
}

.list option {
  min-height: 17px;
  padding: 1px 0;
  border-bottom: 1px dotted #ff8728;
}

.list option:checked {
  background: #0078d7 linear-gradient(#0078d7, #0078d7);
  color: #fff;
}

.combo {
  display: grid;
}

.combo select, .combo svg {
  grid-area: 1 / 1;
}

.combo select {
  appearance: none;
  height: 20px;
  padding: 1px 2px 0;
  border: 1px solid #adadad;
  border-radius: 0;
  background: #e1e1e1;
}

.combo svg {
  width: 10px;
  height: 6px;
  place-self: center end;
  margin-right: 4px;
  color: #505050;
  pointer-events: none;
}

.text {
  height: 20px;
  padding: 0 2px;
  border: 1px solid #abadb3;
  background: #fff;
}

.btn {
  border: 1px solid #adadad;
  background: #e1e1e1;
}

.proj {
  height: 21px;
  margin: 1px 1px 0;
}

.checks {
  display: flex;
  gap: 8px;
  height: 24px;
  align-items: center;
  padding-left: 5px;
}

.checks label, fieldset label {
  display: flex;
  align-items: center;
  gap: 2px;
  white-space: nowrap;
}

.off {
  color: #838383;
}

input[type="checkbox"] {
  appearance: none;
  flex: none;
  width: 13px;
  height: 13px;
  border: 1px solid #333;
  background: #fff;
  display: grid;
  place-items: center;
}

input[type="checkbox"]:checked::after {
  content: "";
  width: 4px;
  height: 8px;
  margin-top: -3px;
  border: solid #444;
  border-width: 0 1px 1px 0;
  transform: rotate(42deg);
}

input[type="checkbox"]:disabled {
  border-color: #ccc;
}

fieldset {
  margin: 2px 5px 0 3px;
  padding: 2px 0 2px 8px;
  border: 1px solid #dcdcdc;
  display: grid;
  grid-template-columns: 167px 127px 1fr;
  grid-auto-rows: 25px;
}

legend {
  padding: 0 3px;
  margin-left: -5px;
}

.last {
  margin-top: 5px;
}

.actions {
  display: flex;
  justify-content: center;
  gap: 2px;
  padding: 10px 0 2px;
}

.actions .btn {
  height: 29px;
  padding: 0 14px;
  display: flex;
  align-items: center;
  gap: 3px;
}

.qmark {
  font: bold 14px "Liberation Sans", sans-serif;
  fill: #fff;
}

/* taskbar */

.taskbar {
  height: 40px;
  display: flex;
  background: linear-gradient(90deg, #cfe6f0, #d8e6ee 50%, #d0d9e8);
  font-family: "Open Sans", sans-serif;
}

.start {
  width: 48px;
  display: grid;
  place-items: center;
}

.search {
  width: 344px;
  display: flex;
  align-items: center;
  gap: 11px;
  padding: 0 11px;
  background: #fff;
  border: 1px solid #c4c4c4;
}

.search input {
  flex: 1;
  border: 0;
  padding: 0;
  font-size: 14px;
}

.search input::placeholder {
  color: #333;
}

.apps {
  display: flex;
  gap: 1px;
  margin-left: 2px;
}

.apps button {
  width: 48px;
  display: grid;
  place-items: center;
  position: relative;
}

.apps .run::after {
  content: "";
  position: absolute;
  left: 4px;
  right: 4px;
  bottom: 0;
  height: 2px;
  background: #0078d7;
}

.apps .more::after {
  background: linear-gradient(90deg, #0078d7 80%, #62aee8 80%);
}

.apps .active {
  background: #f0f6fa;
}

.apps .active::after {
  left: 0;
  right: 0;
}

.word {
  font: bold 9px "Liberation Sans", sans-serif;
  fill: #fff;
}

.tray {
  margin-left: auto;
  display: flex;
  align-items: center;
  gap: 9px;
  padding-right: 3px;
}

.clock {
  width: 70px;
  display: flex;
  flex-direction: column;
  align-items: center;
  line-height: 18px;
}

.count {
  font: 12px "Open Sans", sans-serif;
}

.peek {
  width: 1px;
  height: 100%;
  margin-left: 4px;
  background: #a8b4c0;
}
```
